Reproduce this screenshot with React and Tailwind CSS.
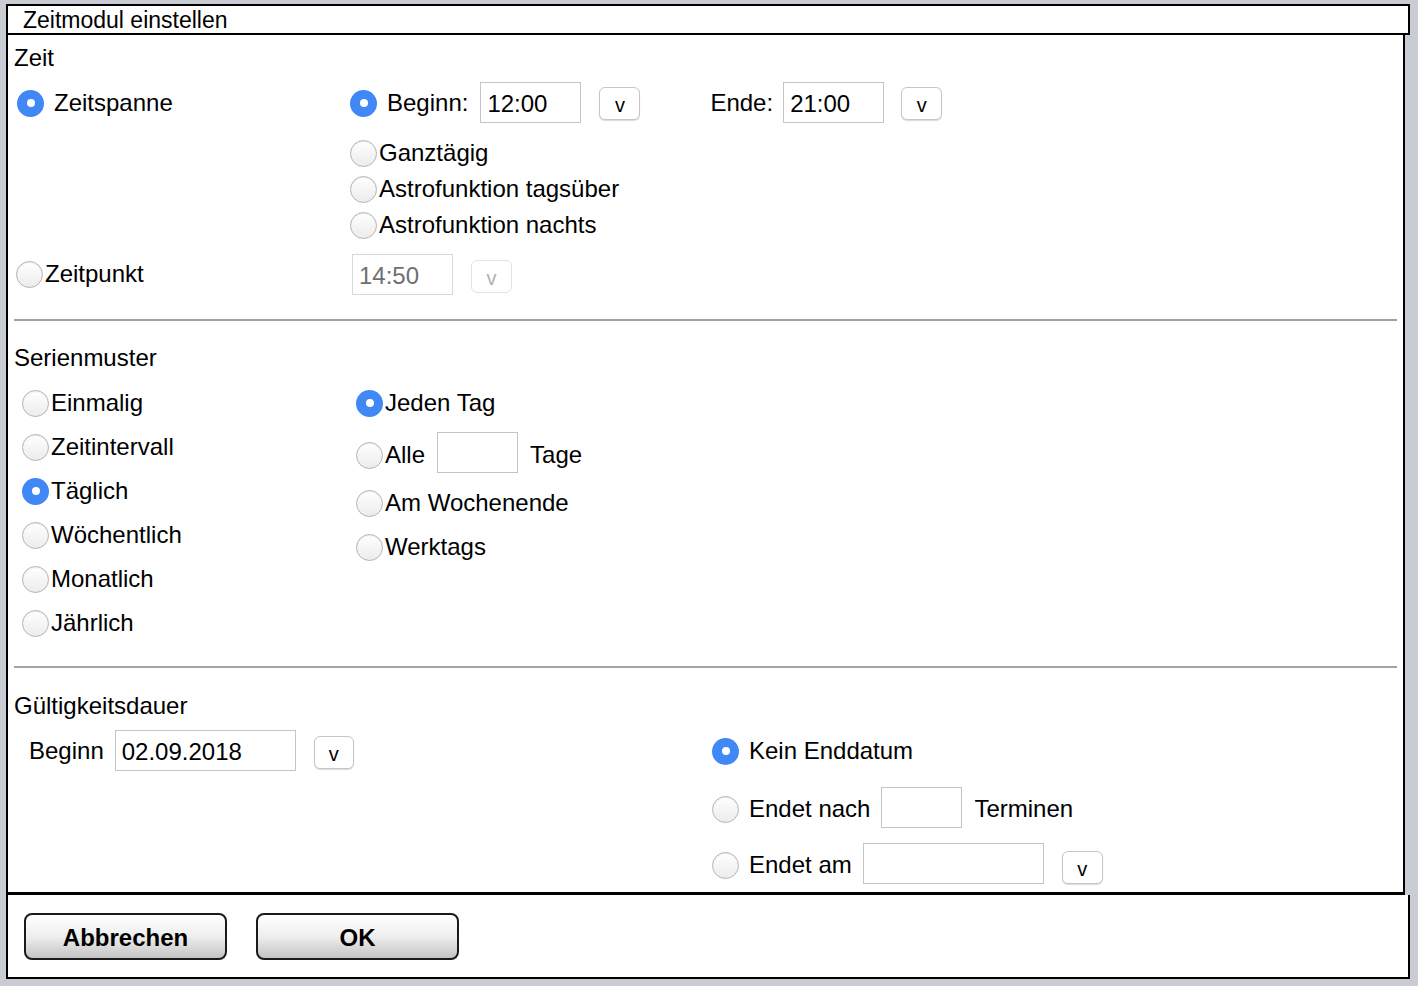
import React from 'react';

const font = { fontFamily: '"Liberation Sans", Arial, sans-serif' };

const Radio = ({ checked }) => (
    checked ? (
        <span className="w-[27px] h-[27px] shrink-0 rounded-full bg-[#3f88f5] flex items-center justify-center">
            <span className="w-[8px] h-[8px] rounded-full bg-white" />
        </span>
    ) : (
        <span className="w-[27px] h-[27px] shrink-0 rounded-full border border-[#b4b4b4] bg-gradient-to-b from-white to-[#ececec] shadow-[inset_0_1px_1px_rgba(0,0,0,0.08)]" />
    )
);

const Choice = ({ checked, label, gap = 'gap-[2px]' }) => (
    <span className={`flex items-center ${gap}`}>
        <Radio checked={checked} />
        <span>{label}</span>
    </span>
);

const Field = ({ value = '', w = 'w-[101px]', disabled }) => (
    <span className={`${w} h-[41px] shrink-0 border border-[#c4c4c4] bg-white flex items-center pl-[6px] pt-[4px] ${disabled ? 'text-[#6f6f6f] border-[#d8d8d8]' : ''}`}>
        {value}
    </span>
);

const Drop = ({ disabled, w = 'w-[41px]' }) => (
    <span className={`${w} h-[33px] shrink-0 rounded-[6px] border bg-white flex items-center justify-center pt-[3px] text-[20px] ${disabled ? 'border-[#e2e2e2] text-[#b0b0b0]' : 'border-[#c6c6c6] shadow-[0_1px_1px_rgba(0,0,0,0.15)] text-black'}`}>
        v
    </span>
);

const Divider = ({ className }) => (
    <div className={`ml-[6px] mr-[6px] border-t-2 border-[#a3a3a3] ${className}`} />
);

export default function App() {
    return (
        <div className="min-h-screen w-full bg-[#c9ccd3] pt-[4px] pl-[6px] pb-[8px] text-black" style={font}>
            {/* title bar */}
            <div className="w-[1404px] h-[31px] border-2 border-black bg-white flex items-center pl-[15px] pt-[2px] text-[23px] leading-none">
                Zeitmodul einstellen
            </div>

            {/* main body */}
            <div className="w-[1399px] h-[860px] pt-[10px] border-x-2 border-b-[3px] border-black bg-white text-[24px] leading-none">
                {/* Zeit */}
                <div className="h-[26px] pl-[6px] flex items-center">Zeit</div>

                <div className="mt-[10px] h-[42px] flex items-center">
                    <div className="w-[342px] pl-[9px] pt-[2px]">
                        <Choice checked label="Zeitspanne" gap="gap-[10px]" />
                    </div>
                    <div className="flex items-center">
                        <span className="pt-[2px]"><Choice checked label="Beginn:" gap="gap-[10px]" /></span>
                        <span className="ml-[12px]"><Field value="12:00" /></span>
                        <span className="ml-[18px] mt-[2px]"><Drop /></span>
                        <span className="ml-[70px] pt-[2px]">Ende:</span>
                        <span className="ml-[10px]"><Field value="21:00" /></span>
                        <span className="ml-[17px] mt-[2px]"><Drop /></span>
                    </div>
                </div>

                <div className="mt-[12px] pl-[342px] flex flex-col">
                    <div className="h-[36px] flex items-center"><Choice label="Ganztägig" /></div>
                    <div className="h-[36px] flex items-center"><Choice label="Astrofunktion tagsüber" /></div>
                    <div className="h-[36px] flex items-center"><Choice label="Astrofunktion nachts" /></div>
                </div>

                <div className="mt-[10px] h-[42px] flex items-center">
                    <div className="w-[344px] pl-[8px]">
                        <Choice label="Zeitpunkt" />
                    </div>
                    <Field value="14:50" disabled />
                    <span className="ml-[18px] mt-[4px]"><Drop disabled /></span>
                </div>

                <Divider className="mt-[24px]" />

                {/* Serienmuster */}
                <div className="mt-[24px] h-[26px] pl-[6px] flex items-center">Serienmuster</div>

                <div className="mt-[10px] flex">
                    <div className="w-[348px] pl-[14px] flex flex-col">
                        <div className="h-[44px] flex items-center"><Choice label="Einmalig" /></div>
                        <div className="h-[44px] flex items-center"><Choice label="Zeitintervall" /></div>
                        <div className="h-[44px] flex items-center"><Choice checked label="Täglich" /></div>
                        <div className="h-[44px] flex items-center"><Choice label="Wöchentlich" /></div>
                        <div className="h-[44px] flex items-center"><Choice label="Monatlich" /></div>
                        <div className="h-[44px] flex items-center"><Choice label="Jährlich" /></div>
                    </div>
                    <div className="flex flex-col">
                        <div className="h-[44px] flex items-center"><Choice checked label="Jeden Tag" /></div>
                        <div className="h-[60px] flex items-center">
                            <Choice label="Alle" />
                            <span className="ml-[12px] -mt-[6px]"><Field w="w-[81px]" /></span>
                            <span className="ml-[12px]">Tage</span>
                        </div>
                        <div className="h-[36px] flex items-center"><Choice label="Am Wochenende" /></div>
                        <div className="h-[52px] flex items-center"><Choice label="Werktags" /></div>
                    </div>
                </div>

                <Divider className="mt-[21px]" />

                {/* Gültigkeitsdauer */}
                <div className="mt-[25px] h-[26px] pl-[6px] flex items-center">Gültigkeitsdauer</div>

                <div className="flex">
                    <div className="w-[704px] pl-[21px] pt-[10px]">
                        <div className="h-[42px] flex items-center">
                            <span className="pt-[2px]">Beginn</span>
                            <span className="ml-[11px]"><Field value="02.09.2018" w="w-[181px]" /></span>
                            <span className="ml-[18px] mt-[4px]"><Drop w="w-[40px]" /></span>
                        </div>
                    </div>
                    <div className="flex flex-col pt-[11px]">
                        <div className="h-[42px] flex items-center"><Choice checked label="Kein Enddatum" gap="gap-[10px]" /></div>
                        <div className="mt-[14px] h-[42px] flex items-center">
                            <span className="pt-[4px]"><Choice label="Endet nach" gap="gap-[10px]" /></span>
                            <span className="ml-[11px]"><Field w="w-[81px]" /></span>
                            <span className="ml-[12px] pt-[4px]">Terminen</span>
                        </div>
                        <div className="mt-[14px] h-[42px] flex items-center">
                            <span className="pt-[4px]"><Choice label="Endet am" gap="gap-[10px]" /></span>
                            <span className="ml-[11px]"><Field w="w-[181px]" /></span>
                            <span className="ml-[18px] mt-[8px]"><Drop /></span>
                        </div>
                    </div>
                </div>
            </div>

            {/* footer */}
            <div className="w-[1404px] h-[84px] border-x-2 border-b-2 border-black bg-white flex items-start pt-[18px] pl-[16px] gap-[29px]">
                <button className="w-[203px] h-[47px] rounded-[8px] border-2 border-[#1a1a1a] bg-gradient-to-b from-white via-[#eeeeee] to-[#c4c4c4] text-[24px] font-bold pt-[2px]">
                    Abbrechen
                </button>
                <button className="w-[203px] h-[47px] rounded-[8px] border-2 border-[#1a1a1a] bg-gradient-to-b from-white via-[#eeeeee] to-[#c4c4c4] text-[24px] font-bold pt-[2px]">
                    OK
                </button>
            </div>
        </div>
    );
}
